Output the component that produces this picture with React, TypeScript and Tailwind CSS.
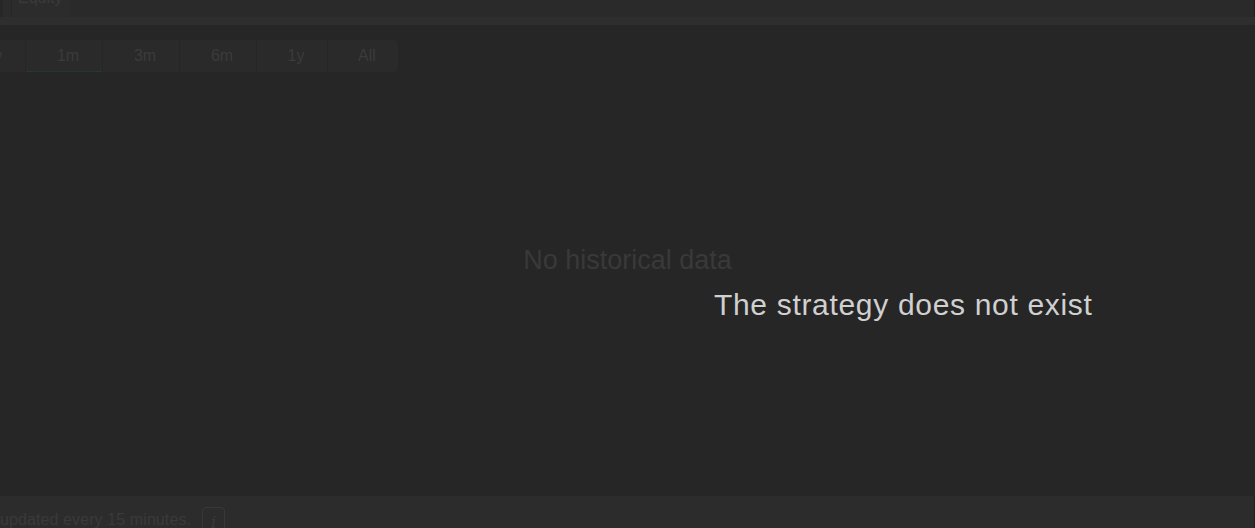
const ranges = [
    { label: "1w", w: "w-[75px]" },
    { label: "1m", w: "w-[76px]", active: true },
    { label: "3m", w: "w-[76px]" },
    { label: "6m", w: "w-[76px]" },
    { label: "1y", w: "w-[70px]" },
    { label: "All", w: "w-[70px]" },
];

const App = () => {
    return (
        <div className="relative w-[1255px] h-[528px] overflow-hidden flex flex-col bg-[#262626] font-['Liberation_Sans',Arial,sans-serif]">
            {/* tabs */}
            <div className="h-[17px] flex border-r border-[#1f1f1f]">
                <div className="w-[3px] bg-[#272727]" />
                <div className="w-[8px] bg-[#2b2b2b]" />
                <div className="w-px bg-[#262626]" />
                <div className="w-[58px] bg-[#2c2c2c] overflow-hidden">
                    <div className="-mt-[14px] pl-[6px] text-[16px] text-[#3a3a3a]">
                        Equity
                    </div>
                </div>
                <div className="flex-1 bg-[#2a2a2a]" />
            </div>
            <div className="h-[8px] bg-[#2e2e2e]" />

            {/* chart */}
            <div className="flex-1 flex flex-col">
                <div className="mt-[15px] -ml-[50px] flex gap-px">
                    {ranges.map((r) => (
                        <div
                            key={r.label}
                            className={`${r.w} h-[32px] flex items-center justify-center pl-[8px] text-[16px] text-[#3b3b3b] bg-[#2a2a2a] last:rounded-r-[4px] ${
                                r.active ? "border-b border-[#1f3a32]" : ""
                            }`}
                        >
                            {r.label}
                        </div>
                    ))}
                </div>
                <div className="pt-[168px] text-center text-[27px] text-[#393939]">
                    No historical data
                </div>
            </div>

            {/* footer */}
            <div className="h-[32px] bg-[#2c2c2c] border-r border-[#1f1f1f] flex items-start pt-[15px]">
                <span className="text-[16px] leading-[18px] tracking-[0.1px] text-[#3a3a3a]">
                    updated every 15 minutes.
                </span>
                <span className="ml-[11px] -mt-[4px] w-[23px] h-[26px] rounded-[4px] border border-[#383838] flex items-start justify-center pt-[3px] text-[16px] italic text-[#3a3a3a] font-['DejaVu_Serif',serif]">
                    i
                </span>
            </div>

            {/* modal message over the dimmed page */}
            <div className="absolute left-[714px] top-[288px] text-[30px] leading-[34px] tracking-[0.68px] text-[#d0d0d0] whitespace-nowrap">
                The strategy does not exist
            </div>
        </div>
    );
};

export default App;
